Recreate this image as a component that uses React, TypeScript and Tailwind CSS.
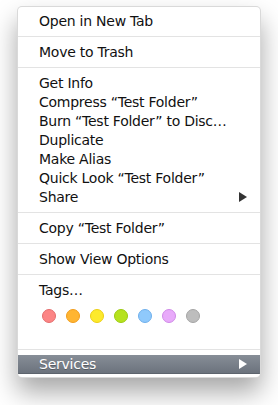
const items1 = [
  "Get Info",
  "Compress \u201cTest Folder\u201d",
  "Burn \u201cTest Folder\u201d to Disc\u2026",
  "Duplicate",
  "Make Alias",
  "Quick Look \u201cTest Folder\u201d",
];

const tags = [
  { fill: "bg-[#fc8585]", ring: "border-[#e46d6d]" },
  { fill: "bg-[#ffb532]", ring: "border-[#f29d1c]" },
  { fill: "bg-[#fdea2c]", ring: "border-[#eccf14]" },
  { fill: "bg-[#b6e21e]", ring: "border-[#9ccb12]" },
  { fill: "bg-[#8fc9fc]", ring: "border-[#6fb0ec]" },
  { fill: "bg-[#e8aafa]", ring: "border-[#d08ae8]" },
  { fill: "bg-[#bdbdbd]", ring: "border-[#a5a5a5]" },
];

function Row({ label, arrow }: { label: string; arrow?: boolean }) {
  return (
    <div className="flex h-[19px] items-center justify-between pl-[21px] pr-[13px] text-[14px] leading-[19px] tracking-[-0.25px] text-[#111]">
      <span className="translate-y-[1px]">{label}</span>
      {arrow && (
        <svg width="8" height="10" viewBox="0 0 8 10">
          <path d="M0 0 L8 5 L0 10 Z" fill="#333" />
        </svg>
      )}
    </div>
  );
}

function Sep() {
  return (
    <div className="flex h-[12px] items-center">
      <div className="h-px w-full bg-[#e3e3e3]" />
    </div>
  );
}

export default function App() {
  return (
    <div className="h-[405px] w-[278px] bg-white pl-[17px] pt-[6px] font-['DejaVu_Sans',sans-serif]">
      <div className="w-[244px] overflow-hidden rounded-[5px] border border-black/15 bg-white pb-[3px] pt-[4px] shadow-[0_14px_26px_rgba(0,0,0,0.35)]">
        <Row label="Open in New Tab" />
        <Sep />
        <Row label="Move to Trash" />
        <Sep />
        {items1.map((l) => (
          <Row key={l} label={l} />
        ))}
        <Row label="Share" arrow />
        <Sep />
        <Row label={"Copy \u201cTest Folder\u201d"} />
        <Sep />
        <Row label="Show View Options" />
        <Sep />
        <Row label={"Tags\u2026"} />
        <div className="flex h-[44px] items-start gap-[10px] pl-[24px] pt-[10px]">
          {tags.map((t, i) => (
            <div key={i} className={`h-[14px] w-[14px] rounded-full border ${t.fill} ${t.ring}`} />
          ))}
        </div>
        <Sep />
        <div className="flex h-[19px] items-center justify-between border-b border-[#5d646d] bg-gradient-to-b from-[#878e97] to-[#6c737d] pl-[21px] pr-[13px] text-[14px] leading-[19px] tracking-[-0.25px] text-white [text-shadow:0_1px_0_rgba(0,0,0,0.25)]">
          <span>Services</span>
          <svg width="8" height="10" viewBox="0 0 8 10">
            <path d="M0 0 L8 5 L0 10 Z" fill="#fff" />
          </svg>
        </div>
      </div>
    </div>
  );
}
